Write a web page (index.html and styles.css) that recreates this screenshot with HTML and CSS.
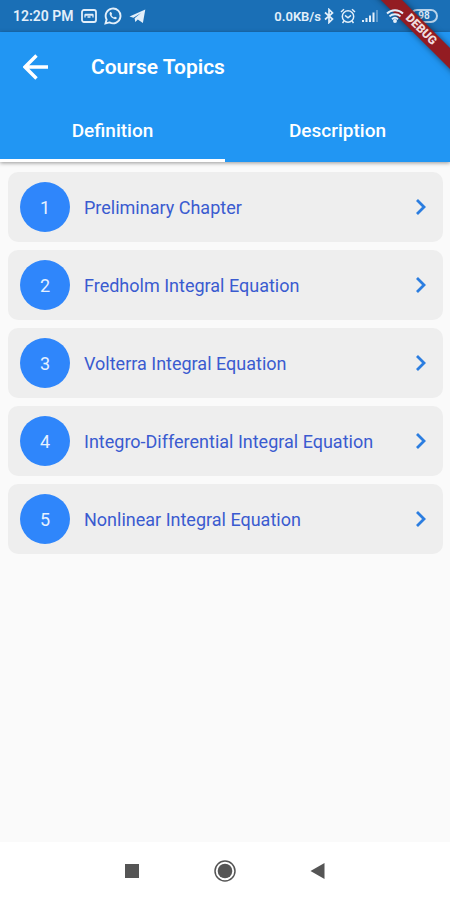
FILE: index.html
```html
<!DOCTYPE html>
<html lang="en">
<head>
<meta charset="utf-8">
<meta name="viewport" content="width=device-width, initial-scale=1">
<title>Course Topics</title>
<link rel="stylesheet" href="styles.css">
</head>
<body>
<div class="screen">
  <div class="status">
    <div class="status-left">
      <span>12:20 PM</span>
      <svg width="16" height="16" viewBox="0 0 16 16" fill="none" stroke="currentColor" stroke-width="1.8"><rect x="1" y="2" width="14" height="12" rx="2"/><path d="M4 6.500h8M4 9.500V7h8v2.500M6.500 9h3" stroke-width="1.300"/></svg>
      <svg width="18" height="18" viewBox="0 0 18 18" fill="none" stroke="currentColor" stroke-width="1.900"><path d="M1.500 16.500l1.100-4A7.400 7.400 0 1 1 5.500 15.400z"/><path d="M6.200 5c-1.600 1.800.2 4.500 2.200 6.100 1.900 1.500 3.800 1.500 4.400.1.300-.8-1.500-1.800-2-1.500l-.8.8C8.700 10 7.900 9 7.500 8l.6-.9C8.300 6.500 7.200 4.400 6.200 5z" fill="currentColor" stroke="none"/></svg>
      <svg width="17" height="16" viewBox="0 0 17 16" fill="currentColor"><path d="M.5 8.400L16.300 1.400 13.900 14.900 8.800 11.500 6.300 14.100 5.600 10.200 12 5 4.400 9.700z"/></svg>
    </div>
    <div class="status-right">
      <span>0.0KB/s</span>
      <svg width="10" height="16" viewBox="0 0 10 16" fill="none" stroke="currentColor" stroke-width="1.700"><path d="M1 4.500l7.500 6.500L5 14.500v-13L8.500 5 1 11.500"/></svg>
      <svg class="alarm" width="16" height="16" viewBox="0 0 16 16" fill="none" stroke="currentColor" stroke-width="1.500"><circle cx="8" cy="8.500" r="5.700"/><path d="M5 7.300l3 2.500 3-2.500M1 4l3-2.800M15 4l-3-2.800M4 13l-1.500 2M12 13l1.500 2"/></svg>
      <svg class="signal" width="18" height="14" viewBox="0 0 18 14" fill="currentColor"><path d="M1 11h2v2H1zM4.500 9h2v4h-2zM8 6.500h2V13H8zM11.500 3.500h2v9.500h-2z"/><path d="M15 1h2v12h-2z" opacity=".35"/></svg>
      <svg class="wifi" width="18" height="16" viewBox="0 0 18 16" fill="none" stroke="currentColor" stroke-width="1.900"><path d="M1 5.500a11.500 11.500 0 0 1 16 0M3.500 8.400a8 8 0 0 1 11 0M6 11.200a4.500 4.500 0 0 1 6 0"/><circle cx="9" cy="13" r="1" fill="currentColor"/></svg>
      <span class="battery">98</span>
    </div>
  </div>

  <header class="appbar">
    <div class="titlebar">
      <button class="back" type="button" aria-label="Back">
        <svg width="26" height="26" viewBox="0 0 26 26" fill="none" stroke="currentColor" stroke-width="3.400"><path d="M25 13H3M13.500 1.500L2 13l11.500 11.500"/></svg>
      </button>
      <h1>Course Topics</h1>
    </div>
    <nav class="tabs">
      <button class="tab active" type="button">Definition</button>
      <button class="tab" type="button">Description</button>
    </nav>
  </header>

  <main class="topics">
    <a class="topic" href="#1"><span class="num">1</span><span class="name">Preliminary Chapter</span><svg class="chev" viewBox="0 0 12 18"><path d="M2 2l7 7-7 7"/></svg></a>
    <a class="topic" href="#2"><span class="num">2</span><span class="name">Fredholm Integral Equation</span><svg class="chev" viewBox="0 0 12 18"><path d="M2 2l7 7-7 7"/></svg></a>
    <a class="topic" href="#3"><span class="num">3</span><span class="name">Volterra Integral Equation</span><svg class="chev" viewBox="0 0 12 18"><path d="M2 2l7 7-7 7"/></svg></a>
    <a class="topic" href="#4"><span class="num">4</span><span class="name">Integro-Differential Integral Equation</span><svg class="chev" viewBox="0 0 12 18"><path d="M2 2l7 7-7 7"/></svg></a>
    <a class="topic" href="#5"><span class="num">5</span><span class="name">Nonlinear Integral Equation</span><svg class="chev" viewBox="0 0 12 18"><path d="M2 2l7 7-7 7"/></svg></a>
  </main>

  <footer class="navbar">
    <button type="button" aria-label="Recent apps"><svg width="24" height="24" viewBox="0 0 24 24"><path d="M5 5h14v14H5z" fill="currentColor"/></svg></button>
    <button type="button" aria-label="Home"><svg width="24" height="24" viewBox="0 0 24 24"><circle cx="12" cy="12" r="10" fill="none" stroke="currentColor" stroke-width="1.500"/><circle cx="12" cy="12" r="7.300" fill="currentColor"/></svg></button>
    <button type="button" aria-label="Previous"><svg width="24" height="24" viewBox="0 0 24 24"><path d="M18.500 4v16L4.500 12z" fill="currentColor"/></svg></button>
  </footer>

  <div class="debug"><span>DEBUG</span></div>
</div>
</body>
</html>
```
FILE: styles.css
```css
* { box-sizing: border-box; }
body { margin: 0; font-family: Roboto, "Liberation Sans", sans-serif; }
button { border: 0; padding: 0; background: none; color: inherit; font: inherit; }
svg { display: block; flex: none; }

.screen {
  position: relative;
  display: flex;
  flex-direction: column;
  min-height: 100vh;
  background: #fafafa;
}

.status {
  display: flex;
  justify-content: space-between;
  align-items: center;
  height: 32px;
  padding: 0 12px 0 13px;
  background: #1a6fb6;
  color: #e3effa;
  font-size: 14px;
  font-weight: 600;
}
.status-left { display: flex; align-items: center; gap: 7px; }
.status-right { display: flex; align-items: center; gap: 3px; font-size: 13px; }
.alarm { margin-left: 3px; }
.signal { margin-left: 2px; }
.wifi { position: relative; z-index: 2; margin-left: 4px; }
.battery {
  width: 28px;
  margin-left: 3px;
  border: 2px solid #b9d3ea;
  border-radius: 7px;
  font-size: 10px;
  line-height: 10px;
  text-align: center;
}

.appbar {
  background: #2196f3;
  color: #fff;
  box-shadow: 0 1px 4px rgba(0, 0, 0, .4);
}
.titlebar { display: flex; align-items: center; height: 70px; padding: 0 23px; gap: 42px; }
h1 { margin: 0; font-size: 21px; font-weight: 600; }
.tabs { display: flex; height: 60px; }
.tab {
  flex: 1;
  border-bottom: 3px solid transparent;
  font-size: 19px;
  font-weight: 500;
}
.tab.active { border-bottom-color: #fff; }

.topics {
  display: flex;
  flex-direction: column;
  flex: 1;
  gap: 8px;
  padding: 10px 7px 10px 8px;
}
.topic {
  display: flex;
  align-items: center;
  height: 70px;
  padding: 0 16px 0 12px;
  border-radius: 10px;
  background: #eee;
  color: #3a5bd0;
  font-size: 18px;
  text-decoration: none;
}
.num {
  display: grid;
  place-items: center;
  width: 50px;
  height: 50px;
  margin-right: 14px;
  border-radius: 50%;
  background: #2f86fb;
  color: #e6f1ff;
}
.name { flex: 1; }
.chev {
  width: 12px;
  height: 18px;
  fill: none;
  stroke: #2b7de0;
  stroke-width: 2.8;
}

.navbar {
  display: flex;
  justify-content: center;
  align-items: center;
  gap: 69px;
  height: 58px;
  background: #fff;
  color: #555;
}

.debug {
  position: absolute;
  z-index: 1;
  top: 0;
  right: 0;
  width: 90px;
  height: 90px;
  overflow: hidden;
  pointer-events: none;
}
.debug span {
  position: absolute;
  top: 22px;
  right: -41px;
  width: 140px;
  background: #931c22;
  box-shadow: 0 0 6px rgba(0, 0, 0, .5);
  color: #f0dcdf;
  font-size: 12px;
  font-weight: 900;
  line-height: 15px;
  text-align: center;
  transform: rotate(45deg);
}
```
